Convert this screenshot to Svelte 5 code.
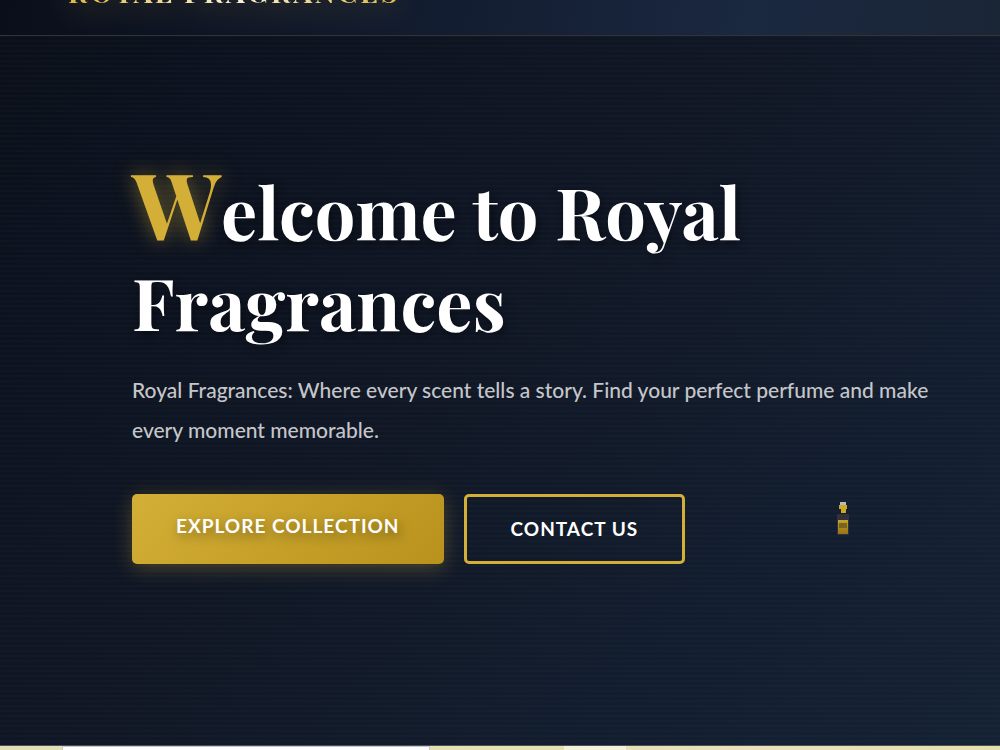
<script lang="ts">
	interface Action {
		label: string;
		href: string;
		kind: 'primary' | 'outline';
	}

	const title = 'Welcome to Royal Fragrances';
	const actions: Action[] = [
		{ label: 'Explore Collection', href: '#collection', kind: 'primary' },
		{ label: 'Contact Us', href: '#contact', kind: 'outline' }
	];
</script>

<div class="page">
	<header class="bar">
		<a class="brand" href="#top">ROYAL FRAGRANCES</a>
	</header>

	<main class="hero">
		<h1><span class="initial">{title[0]}</span>{title.slice(1)}</h1>
		<p>
			Royal Fragrances: Where every scent tells a story. Find your perfect perfume and make every
			moment memorable.
		</p>
		<div class="actions">
			{#each actions as action (action.href)}
				<a class="btn {action.kind}" href={action.href}>{action.label}</a>
			{/each}
			<svg class="bottle" viewBox="0 0 12 34" aria-hidden="true">
				<defs>
					<linearGradient id="liquid" x1="0" y1="0" x2="0" y2="1">
						<stop offset="0" stop-color="#c7a32b" />
						<stop offset="1" stop-color="#967316" />
					</linearGradient>
				</defs>
				<rect x="3" y="0" width="6" height="4" fill="#b9babf" />
				<path d="M2 3h8v4H9v4H4V7H2z" fill="#cca827" />
				<rect x="0" y="12" width="12" height="21" rx="1" fill="#30313a" />
				<rect x="1" y="18" width="10" height="14" fill="url(#liquid)" />
				<rect x="2" y="21" width="8" height="5" fill="#776521" />
			</svg>
		</div>
	</main>

	<section class="next" id="collection">
		<div class="card"></div>
		<div class="badge"></div>
	</section>
</div>

<style>
	:global(body) {
		background: #0a0e1a;
		margin: 0;
	}

	.page {
		display: flex;
		flex-direction: column;
		font-family: Lato, sans-serif;
		height: 100vh;
		overflow: hidden;
	}

	.bar {
		align-items: flex-end;
		background: linear-gradient(100deg, #0a0e1a 0%, #131d31 45%, #1a2840 75%, #1a2636 100%);
		border-bottom: 1px solid #34332f;
		box-sizing: border-box;
		display: flex;
		flex: none;
		height: 36px;
		overflow: hidden;
		padding: 0 68px 25px;
	}

	.brand {
		background: linear-gradient(90deg, #dcb93f, #fbf0dc 50%, #dcb93f);
		background-clip: text;
		color: transparent;
		filter: drop-shadow(0 4px 16px rgba(212, 175, 55, 0.4));
		font-family: 'Playfair Display', 'Liberation Serif', serif;
		font-size: 28px;
		font-weight: 700;
		letter-spacing: 3px;
		line-height: 36px;
		text-decoration: none;
		white-space: nowrap;
	}

	.hero {
		background:
			repeating-linear-gradient(0deg, transparent 0, transparent 3px, rgba(212, 175, 55, 0.025) 3px, rgba(212, 175, 55, 0.025) 5px),
			linear-gradient(135deg, #0a0f1b 0%, #101828 50%, #142236 100%);
		box-sizing: border-box;
		display: flex;
		flex: 1;
		flex-direction: column;
		justify-content: center;
		padding: 0 56px 61px 132px;
	}

	h1 {
		color: #fff;
		font-family: 'Playfair Display', 'Liberation Serif', serif;
		font-size: 72px;
		font-weight: 700;
		line-height: 91px;
		margin: 0 0 23px;
		text-shadow: 2px 4px 10px rgba(0, 0, 0, 0.5);
	}

	.initial {
		color: #d4af37;
		font-size: 92px;
		line-height: 1;
		text-shadow: 0 0 20px rgba(212, 175, 55, 0.5);
	}

	p {
		color: #c5c6ca;
		font-size: 21px;
		font-weight: 500;
		line-height: 40px;
		margin: 0 0 44px;
	}

	.actions {
		display: flex;
		gap: 20px;
	}

	.btn {
		border-radius: 5px;
		color: #fff;
		font-size: 19px;
		font-weight: 700;
		letter-spacing: 1px;
		line-height: 24px;
		padding: 20px 44px;
		text-decoration: none;
		text-transform: uppercase;
	}

	.primary {
		background: linear-gradient(135deg, #d4af37, #b8921c);
		box-shadow: 0 4px 20px rgba(212, 175, 55, 0.3);
		text-shadow: 2px 4px 12px rgba(0, 0, 0, 0.4);
	}

	.outline {
		border: 3px solid #d4af37;
	}

	.bottle {
		height: 34px;
		margin: 8px 0 0 132px;
		width: 12px;
	}

	.next {
		background: linear-gradient(90deg, #e2dfb8, #e6e1ad 50%, #ebe0bb 75%, #e6e0aa);
		border-top: 1px solid #4a5058;
		display: flex;
		flex: none;
		height: 4px;
		padding: 0 62px;
	}

	.card {
		background: #fff;
		border: 1px solid #c8c8cc;
		border-bottom: 0;
		box-sizing: border-box;
		width: 42%;
	}

	.badge {
		background: #f4f1df;
		margin-left: 134px;
		width: 62px;
	}
</style>
